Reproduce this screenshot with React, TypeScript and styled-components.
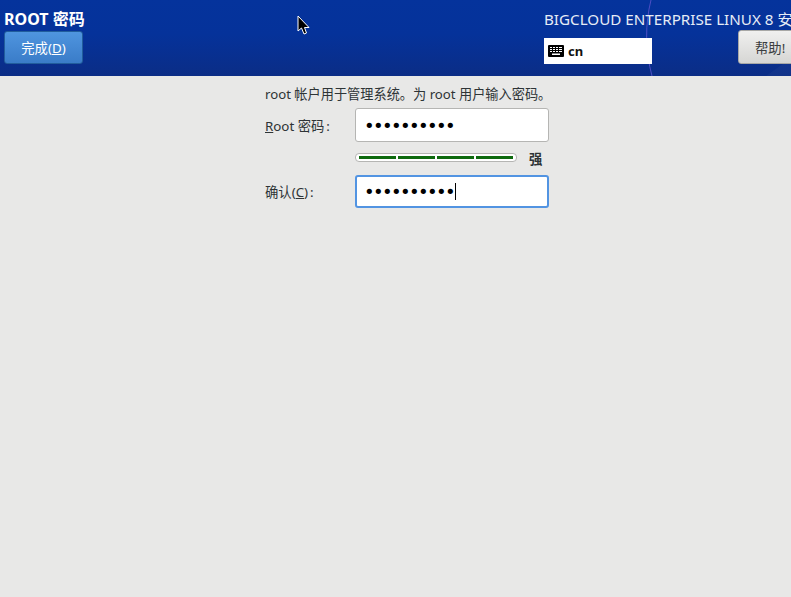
import React from "react";
import styled, { createGlobalStyle } from "styled-components";

const Global = createGlobalStyle`
  html, body { margin: 0; padding: 0; background: #e8e8e7; overflow: hidden; }
  body { font-family: "Noto Sans", "Noto Sans CJK SC", sans-serif; color: #2e3436; }
  #root { width: 791px; height: 597px; }
`;

const Page = styled.div`
  width: 791px;
  height: 597px;
  background: #e8e8e7;
  overflow: hidden;
`;

const Header = styled.header`
  position: relative;
  box-sizing: border-box;
  height: 76px;
  display: flex;
  justify-content: space-between;
  padding: 0 0 0 4px;
  overflow: hidden;
  background: linear-gradient(180deg, #05339c 0%, #05329a 45%, #0b2d86 100%);
`;

const LeftBlock = styled.div`
  display: flex;
  flex-direction: column;
  align-items: flex-start;
  padding-top: 9px;
`;

const Title = styled.div`
  font-size: 16px;
  font-weight: 700;
  line-height: 21px;
  color: #fff;
  margin-bottom: 1px;
  white-space: nowrap;
`;

const DoneButton = styled.div`
  box-sizing: border-box;
  width: 79px;
  height: 33px;
  display: flex;
  align-items: center;
  justify-content: center;
  border: 1px solid #215d9c;
  border-radius: 3px;
  background: linear-gradient(180deg, #4f95df 0%, #3a7cc8 100%);
  color: #fff;
  font-size: 13.33px;
`;

const RightBlock = styled.div`
  position: relative;
  width: 247px;
  flex: none;
  padding-top: 9px;
  display: flex;
  flex-direction: column;
`;

const Product = styled.div`
  font-size: 15.2px;
  line-height: 21px;
  color: #e6ecf6;
  white-space: nowrap;
`;

const ControlRow = styled.div`
  display: flex;
  align-items: flex-start;
`;

const Layout = styled.div`
  box-sizing: border-box;
  width: 108px;
  height: 26px;
  flex: none;
  margin-top: 8px;
  background: #fff;
  display: flex;
  align-items: center;
  gap: 4px;
  padding-left: 4px;
  color: #111;
  font-size: 13px;
  font-weight: 700;
`;

const HelpButton = styled.div`
  box-sizing: border-box;
  width: 70px;
  height: 34px;
  margin-left: 86px;
  flex: none;
  padding-left: 16px;
  display: flex;
  align-items: center;
  border: 1px solid #a8a8a6;
  border-radius: 3px;
  background: linear-gradient(180deg, #f0f0ef 0%, #d6d6d4 100%);
  color: #3a3d3e;
  font-size: 13.33px;
  white-space: nowrap;
`;

const Arc = styled.svg`
  position: absolute;
  left: 630px;
  top: 0;
`;

const Sheen = styled.svg`
  position: absolute;
  right: 0;
  bottom: 0;
`;

const Cursor = styled.svg`
  position: absolute;
  left: 297px;
  top: 15px;
`;

const Content = styled.main`
  padding: 8px 0 0 265px;
`;

const Intro = styled.p`
  margin: 0 0 4px;
  height: 20px;
  font-size: 13.2px;
  line-height: 20px;
  color: #2e3436;
  white-space: nowrap;
`;

const Row = styled.div`
  display: flex;
  align-items: center;
`;

const Label = styled.label`
  width: 90px;
  flex: none;
  font-size: 13.33px;
  color: #2e3436;
  white-space: nowrap;
`;

const Colon = styled.span`
  margin-left: 2px;
`;

const Entry = styled.div<{ $focused?: boolean; $h: number }>`
  box-sizing: border-box;
  width: 194px;
  height: ${(p) => p.$h}px;
  display: flex;
  align-items: center;
  padding-left: ${(p) => (p.$focused ? 7 : 8)}px;
  background: #fff;
  border-radius: 3px;
  border: ${(p) => (p.$focused ? "2px solid #5294e2" : "1px solid #b5b5b3")};
`;

const Dots = styled.span`
  font-family: "DejaVu Sans", sans-serif;
  font-size: 18px;
  letter-spacing: -1.62px;
  color: #000;
`;

const Caret = styled.span`
  width: 1px;
  height: 17px;
  margin-left: 1px;
  background: #000;
`;

const StrengthRow = styled.div`
  display: flex;
  align-items: center;
  height: 33px;
  padding-left: 90px;
`;

const Meter = styled.div`
  box-sizing: border-box;
  width: 162px;
  height: 9px;
  margin-bottom: 2px;
  padding: 2px 3px;
  display: flex;
  gap: 2px;
  background: #fff;
  border: 1px solid #b5b5b3;
  border-radius: 4px;
`;

const Segment = styled.div`
  flex: 1;
  background: #0e6a0e;
`;

const Strength = styled.span`
  margin-left: 12px;
  font-size: 13.33px;
  font-weight: 700;
  color: #2e3436;
`;

const KeyboardIcon = () => (
  <svg width="16" height="12" viewBox="0 0 16 12" aria-hidden="true">
    <rect width="16" height="12" rx="1" fill="#000" />
    <g fill="#fff">
      <rect x="2" y="2" width="2" height="1" /><rect x="5" y="2" width="2" height="1" /><rect x="8" y="2" width="2" height="1" /><rect x="11" y="2" width="3" height="1" />
      <rect x="2" y="4" width="2" height="1" /><rect x="5" y="4" width="2" height="1" /><rect x="8" y="4" width="2" height="1" /><rect x="11" y="4" width="3" height="1" />
      <rect x="2" y="6" width="2" height="1" /><rect x="5" y="6" width="2" height="1" /><rect x="8" y="6" width="2" height="1" /><rect x="11" y="6" width="3" height="1" />
      <rect x="4" y="8.5" width="8" height="1.5" />
    </g>
  </svg>
);

export default function App() {
  return (
    <Page>
      <Global />
      <Header>
        <Arc width="40" height="76" viewBox="0 0 40 76" aria-hidden="true">
          <path d="M21 0 C15 24 15 50 22 76" fill="none" stroke="#4f4fc4" strokeWidth="1" />
        </Arc>
        <Sheen width="30" height="20" viewBox="0 0 30 20" aria-hidden="true">
          <path d="M5 20 L30 2 L30 20 Z" fill="#ffffff" fillOpacity="0.03" />
        </Sheen>
        <LeftBlock>
          <Title>ROOT 密码</Title>
          <DoneButton>完成(<u>D</u>)</DoneButton>
        </LeftBlock>
        <RightBlock>
          <Product>BIGCLOUD ENTERPRISE LINUX 8 安</Product>
          <ControlRow>
            <Layout><KeyboardIcon />cn</Layout>
            <HelpButton>帮助!</HelpButton>
          </ControlRow>
        </RightBlock>
        <Cursor width="13" height="21" viewBox="0 0 13 21" aria-hidden="true">
          <path d="M1 1 L1 16 L4.5 13 L7 19 L9.5 18 L7.5 12.5 L12 12.5 Z" fill="#000" stroke="#fff" strokeWidth="1" />
        </Cursor>
      </Header>
      <Content>
        <Intro>root 帐户用于管理系统。为 root 用户输入密码。</Intro>
        <Row>
          <Label><u>R</u>oot 密码<Colon>:</Colon></Label>
          <Entry $h={34}><Dots>••••••••••</Dots></Entry>
        </Row>
        <StrengthRow>
          <Meter><Segment /><Segment /><Segment /><Segment /></Meter>
          <Strength>强</Strength>
        </StrengthRow>
        <Row>
          <Label>确认(<u>C</u>)<Colon>:</Colon></Label>
          <Entry $h={33} $focused><Dots>••••••••••</Dots><Caret /></Entry>
        </Row>
      </Content>
    </Page>
  );
}
